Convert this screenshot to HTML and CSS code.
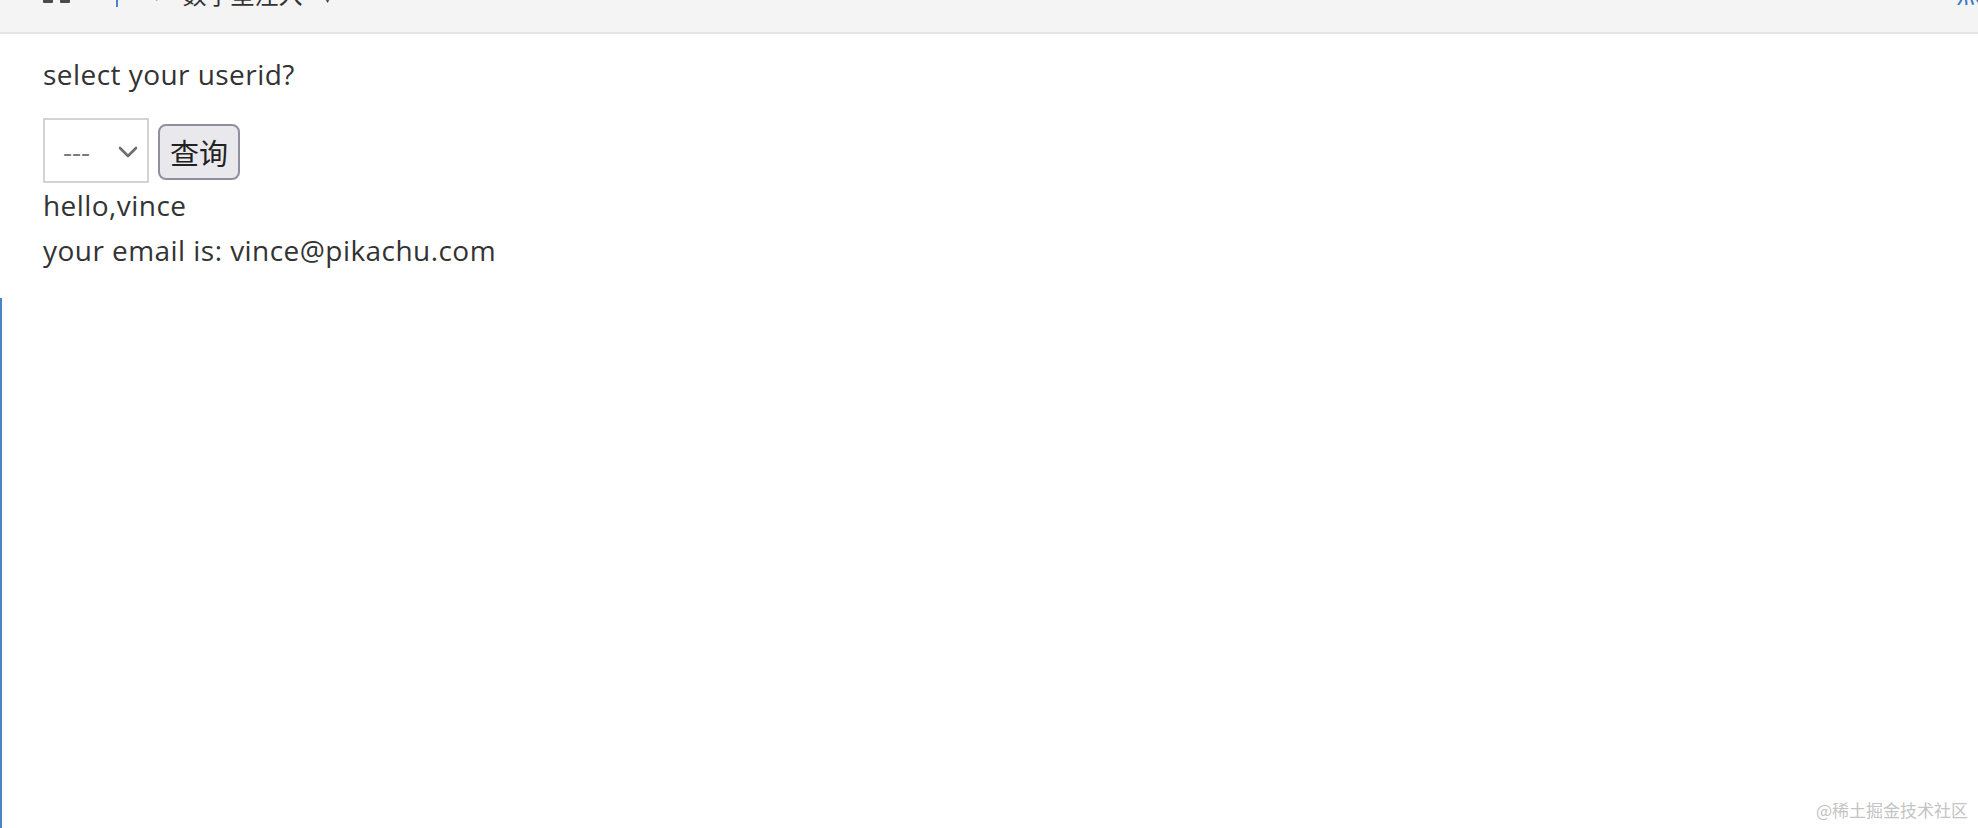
FILE: index.html
```html
<!DOCTYPE html>
<html>
<head>
<meta charset="utf-8">
<link rel="stylesheet" href="styles.css">
</head>
<body>
<div class="topbar">
  <div class="crumbs">
    <span class="grid-icon"><i></i><i></i></span>
    <span class="bar-mark"></span>
    <span class="sep">›</span>
    <span class="title">数字型注入</span>
    <span class="caret">∨</span>
  </div>
  <span class="right-link">点</span>
</div>
<div class="content">
  <p class="line">select your userid?</p>
  <form class="row">
    <div class="select-wrap">
      <select class="select">
        <option>---</option>
      </select>
      <svg class="chev" width="20" height="12" viewBox="0 0 20 12"><path d="M2 2 L10 10 L18 2" fill="none" stroke="#6d6d6d" stroke-width="2.6" stroke-linecap="round" stroke-linejoin="round"/></svg>
    </div>
    <button type="button" class="btn">查询</button>
  </form>
  <p class="line">hello,vince</p>
  <p class="line">your email is: vince@pikachu.com</p>
</div>
<div class="edge"></div>
<div class="watermark">@稀土掘金技术社区</div>
</body>
</html>
```
FILE: styles.css
```css
html, body {
  margin: 0;
  padding: 0;
  background: #ffffff;
  height: 100%;
}
body {
  font-family: "Open Sans", "Noto Sans", "Noto Sans CJK SC", sans-serif;
  color: #333333;
  position: relative;
  overflow: hidden;
}
.topbar {
  height: 32px;
  background: #f4f4f4;
  border-bottom: 2px solid #e4e4e4;
  overflow: hidden;
  position: relative;
  display: flex;
  justify-content: space-between;
}
.crumbs {
  display: flex;
  align-items: flex-end;
  height: 24px;
  margin-top: -17px;
  padding-left: 43px;
}
.grid-icon {
  display: flex;
  gap: 7px;
  margin-bottom: 4px;
}
.grid-icon i {
  display: block;
  width: 10px;
  height: 10px;
  background: #4a4a4a;
  border-radius: 1px;
}
.bar-mark {
  width: 2px;
  height: 12px;
  background: #4a86c5;
  margin-left: 46px;
}
.sep {
  margin-left: 37px;
  color: #999;
  font-size: 18px;
  line-height: 20px;
  margin-bottom: 2px;
}
.title {
  margin-left: 22px;
  font-family: "Noto Sans CJK SC", sans-serif;
  font-size: 24px;
  line-height: 26px;
  color: #333;
}
.caret {
  margin-left: 16px;
  font-size: 18px;
  line-height: 20px;
  color: #444;
  margin-bottom: 1px;
}
.right-link {
  font-family: "Noto Sans CJK SC", sans-serif;
  font-size: 26px;
  line-height: 26px;
  color: #3a78c2;
  margin-top: -21px;
  margin-right: -4px;
  height: 26px;
}
.content {
  padding: 18px 0 0 43px;
}
.line {
  margin: 0;
  font-size: 28px;
  letter-spacing: 0.45px;
  line-height: 45px;
  color: #333333;
}
.row {
  display: flex;
  align-items: center;
  gap: 9px;
  margin: 21px 0 0 0;
  height: 65px;
}
.select-wrap {
  position: relative;
  width: 106px;
  height: 65px;
}
.select {
  -webkit-appearance: none;
  appearance: none;
  box-sizing: border-box;
  width: 106px;
  height: 65px;
  border: 2px solid #d3d3d3;
  border-radius: 0;
  background: #ffffff;
  font-family: "Open Sans", sans-serif;
  font-size: 28px;
  color: #7a7a7a;
  padding: 0 0 0 18px;
  margin: 0;
  outline: none;
}
.chev {
  position: absolute;
  left: 75px;
  top: 28px;
  pointer-events: none;
}
.btn {
  box-sizing: border-box;
  width: 82px;
  height: 56px;
  margin-top: 3px;
  background: #e9e9ed;
  border: 2px solid #8f8f9d;
  border-radius: 8px;
  font-family: "Noto Sans CJK SC", sans-serif;
  font-size: 29px;
  line-height: 1;
  color: #222222;
  padding: 0;
}
.edge {
  position: absolute;
  left: 0;
  top: 298px;
  bottom: 0;
  width: 2px;
  background: #4a86c5;
}
.watermark {
  position: absolute;
  right: 10px;
  bottom: 8px;
  font-family: "Noto Sans CJK SC", sans-serif;
  font-size: 17px;
  line-height: 20px;
  color: #c4c4c4;
}
```
